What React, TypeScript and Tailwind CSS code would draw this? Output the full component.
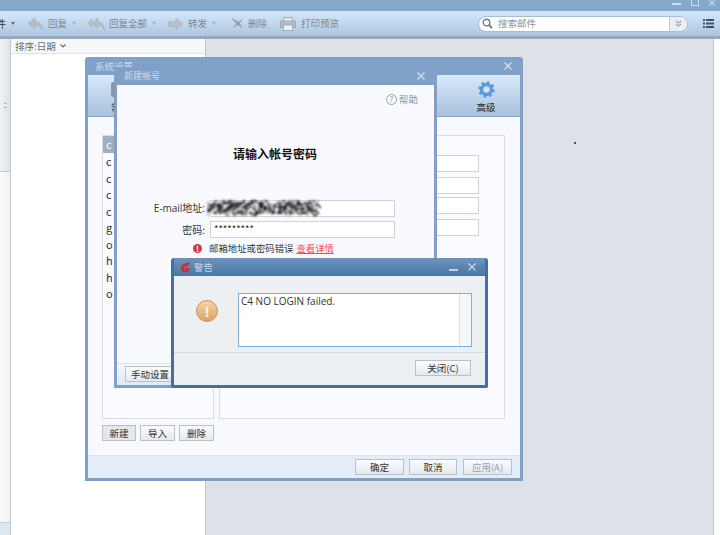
import React from "react";

const font = { fontFamily: '"Noto Sans CJK SC", sans-serif' };

function ToolBtn({ icon, label, caret, className }: { icon: React.ReactNode; label: string; caret?: boolean; className?: string }) {
  return (
    <div className={"flex items-center text-[9.5px] text-[#7d8791] " + (className ?? "")}>
      {icon}
      <span className="ml-[4px]">{label}</span>
      {caret && <span className="ml-[5px] w-0 h-0 border-x-[2.5px] border-x-transparent border-t-[3px] border-t-[#a4afba]" />}
    </div>
  );
}

const ReplyIcon = () => (
  <svg width="17" height="14" viewBox="0 0 17 15"><path d="M8 1 L0.5 7 L8 12 V9 C11 8.5 14 10 16 14 C16 8 13 5 8 5 Z" fill="#b4bdc7" stroke="#9fa9b4" strokeWidth="0.6" /></svg>
);
const ReplyAllIcon = () => (
  <svg width="18" height="14" viewBox="0 0 24 15" preserveAspectRatio="none"><path d="M7 1 L0.5 6.5 L7 12 V1Z" fill="#b4bdc6" /><path d="M14 1 L6.5 7 L14 12 V9 C17 8.5 21 10 23 14 C23 8 19 5 14 5 Z" fill="#b4bdc7" stroke="#9fa9b4" strokeWidth="0.6" /></svg>
);
const ForwardIcon = () => (
  <svg width="17" height="12" viewBox="0 0 17 13"><path d="M1 4 H9 V0.5 L16.5 6.5 L9 12.5 V9 H1 Z" fill="#b7c0ca" stroke="#9fa9b4" strokeWidth="0.6" /></svg>
);
const DeleteIcon = () => (
  <svg width="14" height="13" viewBox="0 0 15 14"><path d="M1 1 C5 2 8 4 9 5.5 L14 1 L10.5 7 L14 13 L8.5 8.5 L3 12 L6.5 7 C5 5 3 3 1 1Z" fill="#98a3ae" /></svg>
);
const PrintIcon = () => (
  <svg className="mr-[1px]" width="16" height="14" viewBox="0 0 16 14"><rect x="3.5" y="0.5" width="9" height="4" fill="#e8ecf0" stroke="#a3adb7" /><rect x="0.5" y="4" width="15" height="6.5" fill="#b4bdc7" stroke="#a3adb7" /><rect x="3.5" y="8" width="9" height="5.5" fill="#eef1f4" stroke="#a3adb7" /></svg>
);
const CloseX = ({ color = "#cfdcea", size = 8 }: { color?: string; size?: number }) => (
  <svg width={size} height={size} viewBox="0 0 8 8"><path d="M0.5 0.5 L7.5 7.5 M7.5 0.5 L0.5 7.5" stroke={color} strokeWidth="1.4" /></svg>
);

function Btn({ children, className }: { children: React.ReactNode; className?: string }) {
  return (
    <div className={"flex items-center justify-center h-[16px] border border-[#b9c0c8] bg-gradient-to-b from-[#fbfcfe] to-[#e4e9ef] text-[9.5px] text-[#333] " + (className ?? "")}>
      {children}
    </div>
  );
}

const noise: { x: number; y: number; c: string }[] = [];
let seed = 12345;
const rnd = () => {
  seed = (seed * 1103515245 + 12345) % 2147483648;
  return seed / 2147483648;
};
for (let i = 0; i < 57; i++) {
  for (let j = 0; j < 8; j++) {
    const v = rnd();
    const edge = j === 0 || j === 7 || i === 56;
    if (edge && rnd() < 0.55) continue;
    noise.push({ x: i * 2, y: j * 2 + 1, c: v < 0.3 ? "#1c1c1c" : v < 0.5 ? "#555" : v < 0.72 ? "#a0a0a0" : "#ededed" });
  }
}

function Settings() {
  const rows = ["c", "c", "c", "c", "g", "o", "h", "h", "o"];
  return (
    <div className="absolute left-[85px] top-[57px] w-[438px] h-[424px] flex flex-col rounded-t-[3px] border-[3px] border-t-0 border-[#7fa1c8]">
      <div className="h-[18px] shrink-0 bg-[#7fa1c8] flex items-center justify-between pl-[7px] pr-[8px] text-[9.5px] text-[#cfdcea]">
        <span>系统设置</span>
        <CloseX />
      </div>
      <div className="h-[42px] shrink-0 flex justify-between bg-gradient-to-b from-[#d8e9f9] to-[#a8c2de] border-b border-[#8ea6c0]">
        <div className="ml-[23px] flex flex-col items-start pt-[7px]">
          <div className="w-[14px] h-[15px] bg-[#8b97a3] rounded-[2px]" />
          <span className="mt-[3px] text-[9.5px] text-[#222] leading-[14px]">常规</span>
        </div>
        <div className="flex flex-col items-center w-[40px] mr-[14px] pt-[6px]">
          <svg width="17" height="17" viewBox="0 0 24 24" fill="none">
            <circle cx="12" cy="12" r="10" stroke="#5a9be4" strokeWidth="3.500" strokeDasharray="4 3.850" />
            <circle cx="12" cy="12" r="7.500" stroke="#4f92df" strokeWidth="3.400" />
            <circle cx="12" cy="12" r="5" fill="#d3e4f5" stroke="#2f6fb8" strokeWidth="0.800" />
          </svg>
          <span className="mt-[2px] text-[9.5px] text-[#222] leading-[14px]">高级</span>
        </div>
      </div>
      <div className="flex-1 min-h-0 bg-[#f8f9fe] flex flex-col pl-[14px] pr-[15px] pt-[18px] border-b border-[#dfe3e8]">
        <div className="flex gap-[5px] h-[284px]">
          <div className="w-[112px] border border-[#d8dbdf] bg-[#fafbff] flex flex-col">
            <div className="h-[17px] bg-[#a0afbf] pl-[3px] text-[11px] leading-[17px] text-white">c</div>
            <div className="flex flex-col">
              {rows.map((r, i) => (
                <div key={i} className="h-[16.500px] pl-[3px] text-[11px] leading-[16px] text-[#333]">{r}</div>
              ))}
            </div>
          </div>
          <div className="w-[286px] border border-[#d8dbdf] bg-[#fafbff] flex flex-col items-end pt-[19px] pr-[25px]">
            <div className="w-[200px] h-[17px] border border-[#cfd2d6] bg-white" />
            <div className="w-[200px] h-[17px] mt-[5px] border border-[#cfd2d6] bg-white" />
            <div className="w-[200px] h-[17px] mt-[3px] border border-[#cfd2d6] bg-white" />
            <div className="w-[200px] h-[17px] mt-[5px] border border-[#cfd2d6] bg-white" />
          </div>
        </div>
        <div className="flex gap-[4px] mt-[6px]">
          <Btn className="w-[34px] !bg-none bg-[#e6e7e8]">新建</Btn>
          <Btn className="w-[35px]">导入</Btn>
          <Btn className="w-[35px]">删除</Btn>
        </div>
      </div>
      <div className="h-[22px] shrink-0 bg-[#e3eef8] flex items-center justify-end pr-[8px] gap-[5px]">
        <Btn className="w-[49px]">确定</Btn>
        <Btn className="w-[48px]">取消</Btn>
        <Btn className="w-[49px] !text-[#9aa2aa] ml-[1px]">应用(A)</Btn>
      </div>
    </div>
  );
}

function NewAccount() {
  return (
    <div className="absolute left-[114px] top-[67px] w-[323px] h-[321px] flex flex-col rounded-t-[3px] border-[3px] border-t-0 border-[#7fa1c8]">
      <div className="h-[18px] shrink-0 bg-[#7fa1c8] flex items-center justify-between pl-[7px] pr-[9px] text-[9px] text-[#cfdcea]">
        <span>新建帐号</span>
        <CloseX />
      </div>
      <div className="flex-1 min-h-0 bg-[#f9faff] flex flex-col items-stretch">
        <div className="flex justify-end items-center pt-[7px] pr-[16px] text-[9.500px] text-[#8d939a]">
          <span className="w-[11px] h-[11px] rounded-full border border-[#9aa0a6] flex items-center justify-center text-[8px] leading-none mr-[2px]">?</span>
          帮助
        </div>
        <div className="text-center font-bold text-[12px] text-[#111] mt-[39px] -ml-[1px] leading-[18px]">请输入帐号密码</div>
        <div className="flex items-center mt-[37px] h-[17px]">
          <span className="w-[88px] text-right text-[10px] text-[#333] whitespace-nowrap" style={{ fontFamily: '"Open Sans","Noto Sans CJK SC",sans-serif' }}>E-mail地址:</span>
          <div className="relative ml-[5px] w-[185px] h-[17px] border border-[#cfd2d6] bg-white">
            <svg width="114" height="18" viewBox="0 0 114 18" className="absolute -left-[4px] -top-[2px] blur-[1px]">
              {noise.map((n, i) => <rect key={i} x={n.x} y={n.y} width="2" height="2" fill={n.c} />)}
            </svg>
          </div>
        </div>
        <div className="flex items-center mt-[4px] h-[17px]">
          <span className="w-[88px] text-right text-[10px] text-[#333]">密码:</span>
          <div className="ml-[5px] w-[185px] h-[17px] border border-[#cfd2d6] bg-white pl-[3px] text-[9.500px] leading-[15px] text-[#222]">*********</div>
        </div>
        <div className="flex items-center mt-[3px] pl-[76px] h-[14px] text-[9.400px]">
          <span className="w-[9px] h-[9px] rounded-full bg-[#cf3a3f] text-white text-[8px] leading-[9px] text-center font-bold">!</span>
          <span className="ml-[7px] text-[#333]">邮箱地址或密码错误</span>
          <span className="ml-[3px] text-[#fb4a4f] underline">查看详情</span>
        </div>
      </div>
      <div className="h-[22px] shrink-0 bg-gradient-to-b from-[#f4f8fc] to-[#dde9f5] pl-[8px] pt-[2px] border-t border-[#dfe3e8]">
        <Btn className="w-[50px]">手动设置</Btn>
      </div>
    </div>
  );
}

function Warning() {
  return (
    <div className="absolute left-[171px] top-[258px] w-[317px] h-[130px] flex flex-col rounded-t-[3px] rounded-b-[2px] border-[3px] border-t-0 border-[#43709f]">
      <div className="h-[18px] shrink-0 bg-gradient-to-b from-[#6c94bd] to-[#4a77a5] flex items-center justify-between pl-[6px] pr-[9px] text-[9.500px] text-[#c5d4e3]">
        <div className="flex items-center gap-[3px]">
          <svg width="11" height="11" viewBox="0 0 11 11"><path d="M10 0.500 C5 0.500 1 3 1 6.500 C1 9.500 3.500 10.500 5.500 10.500 C8 10.500 9.500 8.800 9.500 6 H5.500 L4.500 7.800 H7 C6.500 8.800 5 9 4 8.300 C2.800 7.400 3.200 4.500 8 3.500 Z" fill="#d42a25" /></svg>
          <span>警告</span>
        </div>
        <div className="flex items-center gap-[10px]">
          <span className="w-[9px] h-[2px] bg-[#c5d4e3] mt-[5px]" />
          <CloseX color="#c5d4e3" />
        </div>
      </div>
      <div className="flex-1 min-h-0 bg-[#ecf0f3] flex flex-col">
        <div className="h-[77px] flex pl-[22px] pt-[17px] border-b border-[#d6dadf]">
          <div className="w-[22px] h-[22px] mt-[7px] rounded-full border border-[#c9965a] bg-gradient-to-b from-[#f3d6a6] to-[#dca564] flex items-center justify-center text-[#fdf6ea] font-bold text-[15px] leading-none" style={{ fontFamily: '"Liberation Sans", sans-serif' }}>!</div>
          <div className="ml-[20px] w-[234px] h-[54px] border border-[#7db1dc] bg-white flex">
            <div className="flex-1 ml-[1px] pl-[1px] pt-[1px] border-l-0 text-[10px] leading-[13px] text-[#333]" style={{ fontFamily: '"Open Sans", sans-serif' }}>C4 NO LOGIN failed.</div>
            <div className="w-[12px] border-l border-[#d9dde1] bg-[#f6f7f9]" />
          </div>
        </div>
        <div className="flex justify-end pr-[14px] pt-[7px]">
          <Btn className="w-[56px] h-[16px] bg-gradient-to-b from-[#fbfcfe] to-[#dfe6ee]">关闭(C)</Btn>
        </div>
      </div>
    </div>
  );
}

export default function App() {
  return (
    <div className="relative w-[720px] h-[535px] overflow-hidden flex flex-col bg-white" style={font}>
      <div className="h-[11px] shrink-0 bg-[#85a8cc] flex justify-end items-start gap-[10px] pr-[5px]">
        <span className="w-[9px] h-[2px] bg-[#cfdcea] mt-[3px]" />
        <span className="w-[8px] h-[6px] border border-[#cfdcea] border-t-0" />
        <CloseX size={6} />
      </div>
      <div className="h-[25px] shrink-0 flex items-center bg-gradient-to-b from-[#d5e8fa] to-[#abc6e1] pr-[6px]">
        <span className="text-[10px] text-[#333] -ml-[4px]">件</span>
        <span className="ml-[5px] w-0 h-0 border-x-[2.5px] border-x-transparent border-t-[3px] border-t-[#5a6672]" />
        <ToolBtn className="ml-[12px]" icon={<ReplyIcon />} label="回复" caret />
        <ToolBtn className="ml-[11px]" icon={<ReplyAllIcon />} label="回复全部" caret />
        <ToolBtn className="ml-[11px]" icon={<ForwardIcon />} label="转发" caret />
        <ToolBtn className="ml-[14px]" icon={<DeleteIcon />} label="删除" />
        <ToolBtn className="ml-[13px]" icon={<PrintIcon />} label="打印预览" />
        <div className="ml-auto flex items-center w-[210px] h-[16px] rounded-full border border-[#a8bdd2] bg-white overflow-hidden">
          <svg className="ml-[3px]" width="11" height="11" viewBox="0 0 11 11" fill="none"><circle cx="4.500" cy="4.500" r="3.300" stroke="#6f7b87" strokeWidth="1.400" /><path d="M7 7 L10 10" stroke="#6f7b87" strokeWidth="1.800" /></svg>
          <span className="ml-[5px] text-[9.500px] text-[#8a929a]">搜索邮件</span>
          <div className="ml-auto w-[18px] h-full border-l border-[#c2ced9] bg-[#e9eff5] flex items-center justify-center">
            <svg width="7" height="7" viewBox="0 0 7 7" fill="none"><path d="M1 0.800 L3.500 3 L6 0.800 M1 3.800 L3.500 6 L6 3.800" stroke="#6f7b87" /></svg>
          </div>
        </div>
        <svg className="ml-[15px]" width="11" height="9" viewBox="0 0 11 9"><path d="M0 0h2v2H0zM3 0h8v2H3zM0 3.500h2v2H0zM3 3.500h8v2H3zM0 7h2v2H0zM3 7h8v2H3z" fill="#3d5269" /></svg>
      </div>
      <div className="h-[3px] shrink-0 bg-[#9aa9b9]" />
      <div className="flex-1 min-h-0 flex">
        <div className="w-[11px] flex flex-col border-r border-[#c4c8cc]">
          <div className="h-[133px] bg-gradient-to-r from-[#f2f3f5] to-[#dfe2e6] border-b border-[#c4c8cc] flex items-center justify-end pr-[3px]">
            <span className="w-[3px] h-[5px] border-y border-[#aeb4ba]" />
          </div>
          <div className="flex-1 bg-gradient-to-r from-[#fafbf9] to-[#f1f3f1]" />
          <div className="h-[13px] bg-[#dce8f2] border-t border-[#c4d2dc]" />
        </div>
        <div className="w-[195px] border-r border-[#c4c8cc] bg-white">
          <div className="h-[15px] bg-[#f7f8fa] border-b border-[#dfe2e5] pl-[4px] flex items-center text-[9.500px] text-[#666d74]">
            排序:日期
            <svg className="ml-[4px]" width="6" height="4" viewBox="0 0 6 4" fill="none"><path d="M0.500 0.500 L3 3 L5.500 0.500" stroke="#666d74" strokeWidth="1.200" /></svg>
          </div>
        </div>
        <div className="flex-1 bg-[#dce2e8]" />
        <div className="w-[7px] bg-white border-l border-[#c4c8cc]" />
      </div>
      <Settings />
      <NewAccount />
      <Warning />
      <span className="absolute left-[574px] top-[142px] w-[2px] h-[2px] bg-[#d8202a]" />
    </div>
  );
}
